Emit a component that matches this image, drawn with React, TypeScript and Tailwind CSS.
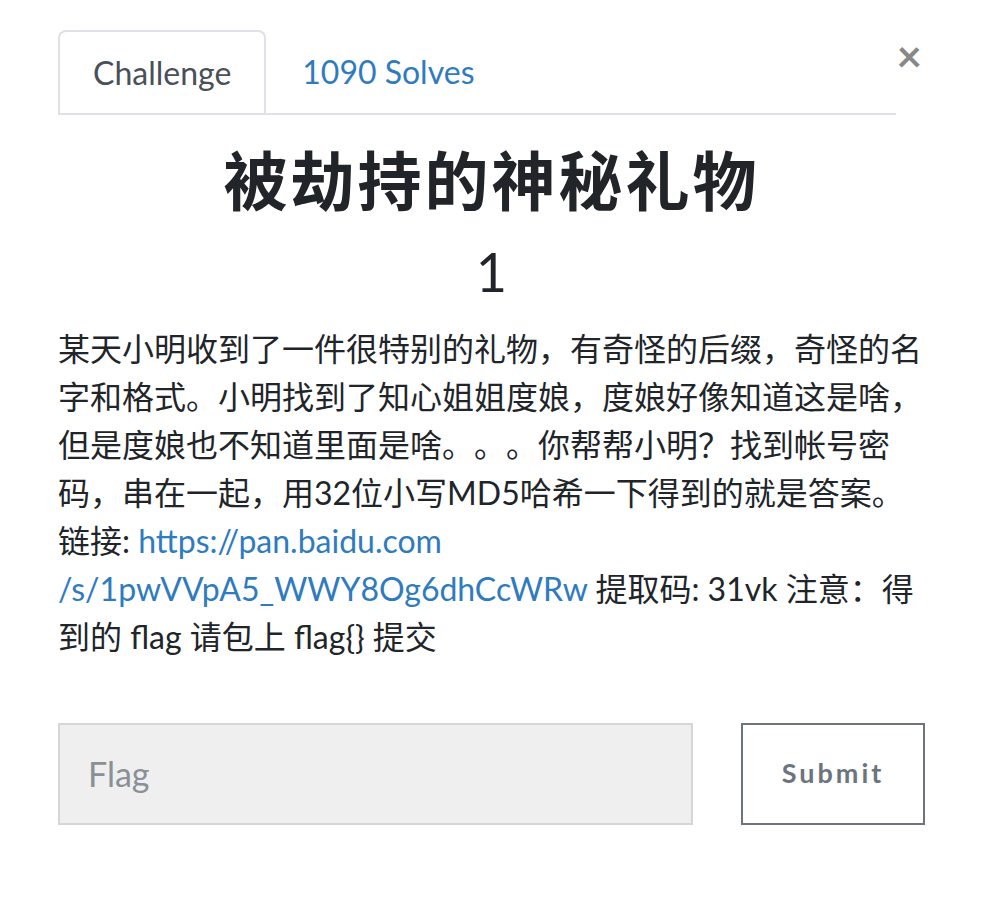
export default function App() {
  return (
    <div
      className="w-[982px] h-[912px] bg-white text-[#212529]"
      style={{ fontFamily: 'Lato, "Noto Sans CJK SC", sans-serif' }}
    >
      <div className="pl-[58px] pr-[57px] pt-[30px]">
        <div className="flex items-start justify-between">
          <nav className="flex w-[839px] border-b-2 border-[#dee2e6]">
            <div className="-mb-[2px] px-[33px] h-[83px] flex items-center rounded-t-[8px] border-2 border-b-0 border-[#dee2e6] bg-white text-[32px] text-[#495057]">
              Challenge
            </div>
            <div className="px-[36px] h-[83px] flex items-center text-[32px] text-[#2f7bbf]">
              1090 Solves
            </div>
          </nav>
          <button className="mt-[3px] mr-[3px] text-[#888] text-[44px] font-bold leading-none">
            ×
          </button>
        </div>

        <h1 className="mt-[28px] text-center text-[64px] font-bold leading-[1.2] tracking-[3px]">
          被劫持的神秘礼物
        </h1>
        <div className="mt-[20px] text-center text-[54px] leading-[1.2]">1</div>

        <p className="mt-[20px] text-[32px] leading-[48px] [text-spacing-trim:space-all]">
          某天小明收到了一件很特别的礼物，有奇怪的后缀，奇怪的名字和格式。小明找到了知心姐姐度娘，度娘好像知道这是啥，但是度娘也不知道里面是啥。。。你帮帮小明？找到帐号密码，串在一起，用32位小写MD5哈希一下得到的就是答案。
          <br />
          链接:{" "}
          <a className="text-[#2f7bbf]" href="#">
            https://pan.baidu.com
            <br />
            /s/1pwVVpA5_WWY8Og6dhCcWRw
          </a>{" "}
          提取码: 31vk 注意：得到的 flag 请包上 flag{"{}"} 提交
        </p>

        <div className="mt-[62px] flex gap-[48px]">
          <div className="flex-1 h-[102px] bg-[#efefef] border-2 border-[#d4d7da] flex items-center px-[28px] text-[34px] text-[#8a9096]">
            Flag
          </div>
          <button className="w-[184px] h-[102px] border-2 border-[#6c757d] text-[#6c757d] text-[27px] font-bold tracking-[3px]">
            Submit
          </button>
        </div>
      </div>
    </div>
  );
}
